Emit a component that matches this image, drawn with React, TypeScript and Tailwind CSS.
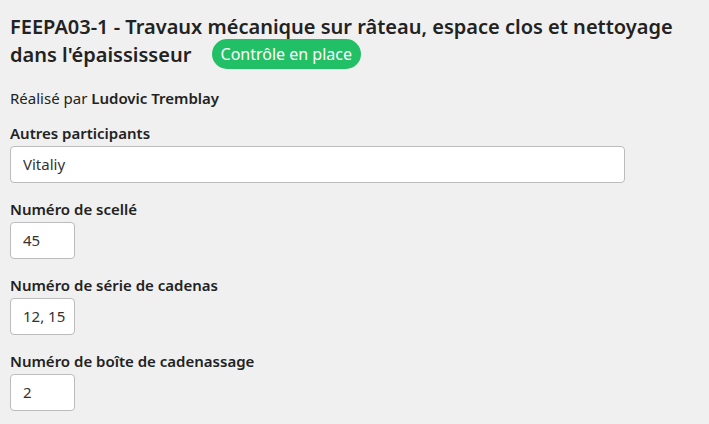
import React from 'react';

const font = { fontFamily: '"Noto Sans", "Open Sans", sans-serif' };

const Field: React.FC<{ label: string; value: string; wide?: boolean }> = ({ label, value, wide }) => (
  <div className="flex flex-col">
    <label className="text-[15px] font-semibold text-[#222] leading-[20px] mb-[3px]">{label}</label>
    <input
      readOnly
      value={value}
      className={`${wide ? 'w-[615px]' : 'w-[65px]'} h-[37px] rounded-[4px] border border-[#bcbcbc] bg-white pl-[12px] pr-[2px] text-[15px] text-[#333] outline-none`}
    />
  </div>
);

export default function App() {
  return (
    <div className="min-h-[424px] bg-[#f0f0f0] px-[10px] pt-[13px]" style={font}>
      <h1 className="text-[20px] font-semibold leading-[28px] text-[#222]">
        FEEPA03-1 - Travaux mécanique sur râteau, espace clos et nettoyage dans l'épaississeur{' '}
        <span className="relative -top-[3px] ml-[15px] inline-block rounded-full bg-[#22c066] px-[9px] py-[3px] align-middle text-[16px] font-normal leading-[24px] text-white">
          Contrôle en place
        </span>
      </h1>
      <p className="mt-[16px] text-[15px] leading-[20px] text-[#222]">
        Réalisé par <span className="font-semibold">Ludovic Tremblay</span>
      </p>
      <div className="mt-[15px] flex flex-col gap-[16px]">
        <Field label="Autres participants" value="Vitaliy" wide />
        <Field label="Numéro de scellé" value="45" />
        <Field label="Numéro de série de cadenas" value="12, 15" />
        <Field label="Numéro de boîte de cadenassage" value="2" />
      </div>
    </div>
  );
}
